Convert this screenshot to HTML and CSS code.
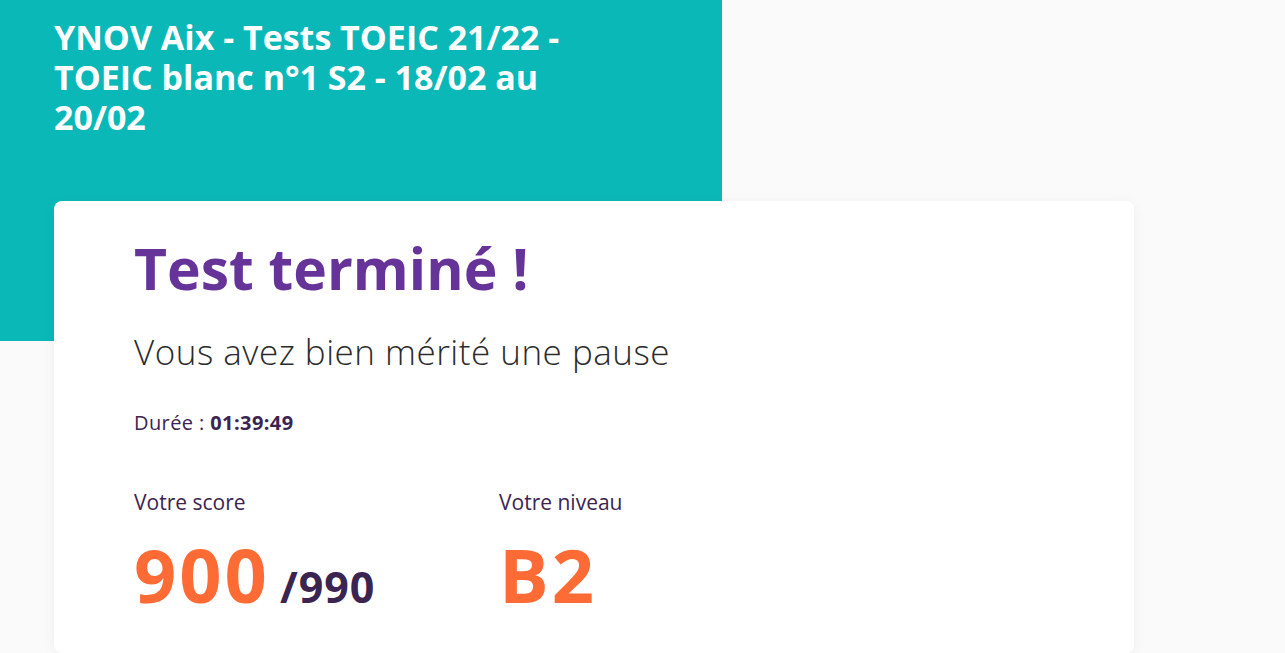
FILE: index.html
```html
<!DOCTYPE html>
<html lang="fr">
<head>
<meta charset="utf-8">
<title>Test terminé</title>
<link rel="stylesheet" href="styles.css">
</head>
<body>
<div class="page">
  <header class="hero">
    <h2 class="hero-title">YNOV Aix - Tests TOEIC 21/22 - TOEIC blanc n°1 S2 - 18/02 au 20/02</h2>
  </header>
  <main class="card">
    <h1 class="card-title">Test terminé !</h1>
    <p class="card-sub">Vous avez bien mérité une pause</p>
    <p class="duration">Durée : <strong>01:39:49</strong></p>
    <div class="results">
      <div class="result">
        <div class="result-label">Votre score</div>
        <div class="result-value"><span class="result-num">900</span><span class="result-max">/990</span></div>
      </div>
      <div class="result">
        <div class="result-label">Votre niveau</div>
        <div class="result-value"><span class="result-num">B2</span></div>
      </div>
    </div>
  </main>
</div>
</body>
</html>
```
FILE: styles.css
```css
* { box-sizing: border-box; }
html, body { margin: 0; padding: 0; }
body {
  background: #fafafa;
  font-family: "Open Sans", "DejaVu Sans", sans-serif;
  color: #3b2450;
}
.page { width: 1285px; }
.hero {
  width: 722px;
  height: 341px;
  background: #0bb8b8;
  padding: 17px 138px 0 54px;
}
.hero-title {
  margin: 0;
  color: #fff;
  font-size: 34px;
  line-height: 40px;
  font-weight: 700;
}
.card {
  margin: -140px 0 0 54px;
  width: 1080px;
  height: 452px;
  background: #fff;
  border-radius: 8px;
  box-shadow: 0 2px 14px rgba(0,0,0,0.05);
  padding: 32px 80px 0;
}
.card-title {
  margin: 0;
  font-size: 57px;
  line-height: 70px;
  font-weight: 700;
  color: #663399;
}
.card-sub {
  margin: 28px 0 0;
  font-size: 35px;
  line-height: 42px;
  letter-spacing: 0.5px;
  font-weight: 300;
  color: #2b2b2b;
}
.duration {
  margin: 38px 0 0;
  font-size: 20px;
  line-height: 24px;
  letter-spacing: 0.4px;
  color: #3b2450;
}
.duration strong { font-weight: 700; }
.results {
  display: grid;
  grid-template-columns: 365px 365px;
  margin-top: 55px;
}
.result-label {
  font-size: 21px;
  line-height: 24px;
  color: #3b2450;
}
.result-value {
  margin-top: 21px;
  font-size: 74px;
  line-height: 80px;
  font-weight: 700;
  color: #ff6b35;
  white-space: nowrap;
}
.result-num { letter-spacing: 3px; }
.result-max {
  margin-left: 10px;
  font-size: 43px;
  letter-spacing: 1px;
  color: #3b2450;
}
```
